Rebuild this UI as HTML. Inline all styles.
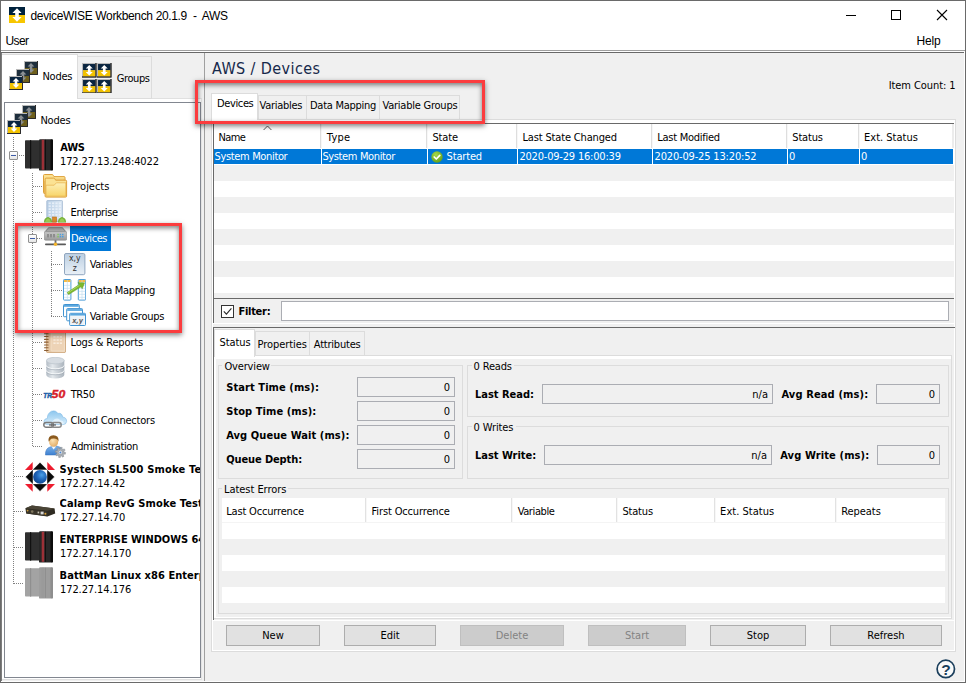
<!DOCTYPE html>
<html lang="en"><head><meta charset="utf-8"><title>deviceWISE Workbench 20.1.9 - AWS</title>
<style>
html,body{margin:0;padding:0}
body{width:966px;height:683px;position:relative;overflow:hidden;background:#f0f0f0;font-family:'DejaVu Sans Condensed','Liberation Sans',sans-serif;font-size:11px;color:#000}
div,span.t,svg{position:absolute}
span.t{white-space:pre;line-height:16px;height:16px}
.fld{box-sizing:border-box;border:1px solid #abadb3;background:#f0f0f0}
.btn{box-sizing:border-box;border:1px solid #adadad;background:#e1e1e1}
.btn.dis{border-color:#bfbfbf;background:#cccccc}
.grp{box-sizing:border-box;border:1px solid #dcdcdc}
.clipL{width:140.4px;overflow:hidden}
</style></head><body>

<div style="left:0px;top:0px;width:966px;height:683px;background:#6a6a6a;"></div>
<div style="left:1px;top:1px;width:964px;height:681px;background:#ffffff;"></div>
<!-- title bar -->
<svg style="left:9px;top:7px" width="16" height="16" viewBox="0 0 16 16"><rect width="16" height="8" fill="#00223d"/><rect y="8" width="16" height="8" fill="#f7c600"/><path d="M8 1.2 L12.6 6 H9.8 V10 H12.6 L8 14.8 L3.4 10 H6.2 V6 H3.4 Z" fill="#fff"/></svg>
<span class="t" style="left:30.5px;top:8px;font-size:12px;font-family:'Liberation Sans',sans-serif;letter-spacing:-0.35px;">deviceWISE Workbench 20.1.9  -  AWS</span>
<div style="left:846px;top:15px;width:10px;height:1px;background:#000;"></div>
<div style="left:891px;top:10px;width:10px;height:10px;box-sizing:border-box;border:1px solid #000;"></div>
<svg style="left:936px;top:9px" width="12" height="12" viewBox="0 0 12 12"><path d="M1 1 L11 11 M11 1 L1 11" stroke="#000" stroke-width="1.1" fill="none"/></svg>
<span class="t" style="left:5.5px;top:33px;font-size:12px;font-family:'Liberation Sans',sans-serif;letter-spacing:-0.6px;">User</span>
<span class="t" style="left:916.5px;top:33px;font-size:12px;font-family:'Liberation Sans',sans-serif;letter-spacing:-0.192px;">Help</span>
<div style="left:1px;top:50px;width:964px;height:1px;background:#a0a0a0;"></div>
<div style="left:1px;top:52px;width:963px;height:1px;background:#696969;"></div>
<div style="left:1px;top:53px;width:963px;height:628px;background:#f0f0f0;"></div>
<!-- left panel -->
<div style="left:1px;top:53px;width:1px;height:628px;background:#7d7d7d;"></div>
<div style="left:2px;top:99px;width:199px;height:580px;background:#ffffff;"></div>
<div style="left:201px;top:98px;width:1px;height:582px;background:#e3e3e3;"></div>
<div style="left:2px;top:679px;width:199px;height:1px;background:#e0e0e0;"></div>
<div style="left:2px;top:54px;width:76px;height:45px;background:#ffffff;box-sizing:border-box;border-top:1px solid #dcdcdc;border-right:1px solid #dcdcdc;"></div>
<div style="left:78px;top:56px;width:74px;height:43px;background:#f0f0f0;box-sizing:border-box;border:1px solid #dcdcdc;border-left:none;"></div>
<div style="left:152px;top:98px;width:50px;height:1px;background:#e0e0e0;"></div>
<div style="left:204px;top:53px;width:1px;height:628px;background:#a0a0a0;"></div>
<div style="left:4px;top:102px;width:197px;height:576px;background:#ffffff;box-sizing:border-box;border:1px solid #828790;"></div>
<svg style="left:23.5px;top:61px" width="14" height="14" viewBox="0 0 14 14"><rect width="14" height="14" fill="#4a4a4a"/><rect x="0" y="0" width="13" height="13" fill="#b9b9b9"/><rect x="1" y="1" width="12" height="6" fill="#1f2f3d"/><rect x="1" y="7" width="12" height="6" fill="#6e5f1c"/><path d="M7 2 L10.4 5.4 H8.3 V8.6 H10.4 L7 12 L3.6 8.6 H5.7 V5.4 H3.6 Z" fill="#8a8f94"/><path d="M0 13.5 H13.5 V0" stroke="#2b2b2b" stroke-width="1" fill="none"/></svg>
<svg style="left:16.0px;top:68.7px" width="14" height="14" viewBox="0 0 14 14"><rect width="14" height="14" fill="#4a4a4a"/><rect x="0" y="0" width="13" height="13" fill="#b9b9b9"/><rect x="1" y="1" width="12" height="6" fill="#1f2f3d"/><rect x="1" y="7" width="12" height="6" fill="#6e5f1c"/><path d="M7 2 L10.4 5.4 H8.3 V8.6 H10.4 L7 12 L3.6 8.6 H5.7 V5.4 H3.6 Z" fill="#8a8f94"/><path d="M0 13.5 H13.5 V0" stroke="#2b2b2b" stroke-width="1" fill="none"/></svg>
<svg style="left:8.5px;top:76.4px" width="14" height="14" viewBox="0 0 14 14"><rect width="14" height="14" fill="#4a4a4a"/><rect x="0" y="0" width="13" height="13" fill="#b9b9b9"/><rect x="1" y="1" width="12" height="6" fill="#0a2540"/><rect x="1" y="7" width="12" height="6" fill="#f2c200"/><path d="M7 2 L10.4 5.4 H8.3 V8.6 H10.4 L7 12 L3.6 8.6 H5.7 V5.4 H3.6 Z" fill="#ffffff"/><path d="M0 13.5 H13.5 V0" stroke="#2b2b2b" stroke-width="1" fill="none"/></svg>
<span class="t" style="left:42.4px;top:69px;font-size:11px;letter-spacing:-0.223px;">Nodes</span>
<svg style="left:82px;top:63px" width="14.5" height="14.5" viewBox="0 0 14 14"><rect width="14" height="14" fill="#4a4a4a"/><rect x="0" y="0" width="13" height="13" fill="#b9b9b9"/><rect x="1" y="1" width="12" height="6" fill="#0a2540"/><rect x="1" y="7" width="12" height="6" fill="#f2c200"/><path d="M7 2 L10.4 5.4 H8.3 V8.6 H10.4 L7 12 L3.6 8.6 H5.7 V5.4 H3.6 Z" fill="#ffffff"/><path d="M0 13.5 H13.5 V0" stroke="#2b2b2b" stroke-width="1" fill="none"/></svg>
<svg style="left:97px;top:63px" width="14.5" height="14.5" viewBox="0 0 14 14"><rect width="14" height="14" fill="#4a4a4a"/><rect x="0" y="0" width="13" height="13" fill="#b9b9b9"/><rect x="1" y="1" width="12" height="6" fill="#0a2540"/><rect x="1" y="7" width="12" height="6" fill="#f2c200"/><path d="M7 2 L10.4 5.4 H8.3 V8.6 H10.4 L7 12 L3.6 8.6 H5.7 V5.4 H3.6 Z" fill="#ffffff"/><path d="M0 13.5 H13.5 V0" stroke="#2b2b2b" stroke-width="1" fill="none"/></svg>
<svg style="left:82px;top:78.5px" width="14.5" height="14.5" viewBox="0 0 14 14"><rect width="14" height="14" fill="#4a4a4a"/><rect x="0" y="0" width="13" height="13" fill="#b9b9b9"/><rect x="1" y="1" width="12" height="6" fill="#0a2540"/><rect x="1" y="7" width="12" height="6" fill="#f2c200"/><path d="M7 2 L10.4 5.4 H8.3 V8.6 H10.4 L7 12 L3.6 8.6 H5.7 V5.4 H3.6 Z" fill="#ffffff"/><path d="M0 13.5 H13.5 V0" stroke="#2b2b2b" stroke-width="1" fill="none"/></svg>
<svg style="left:97px;top:78.5px" width="14.5" height="14.5" viewBox="0 0 14 14"><rect width="14" height="14" fill="#4a4a4a"/><rect x="0" y="0" width="13" height="13" fill="#b9b9b9"/><rect x="1" y="1" width="12" height="6" fill="#0a2540"/><rect x="1" y="7" width="12" height="6" fill="#f2c200"/><path d="M7 2 L10.4 5.4 H8.3 V8.6 H10.4 L7 12 L3.6 8.6 H5.7 V5.4 H3.6 Z" fill="#ffffff"/><path d="M0 13.5 H13.5 V0" stroke="#2b2b2b" stroke-width="1" fill="none"/></svg>
<span class="t" style="left:116.7px;top:71px;font-size:11px;letter-spacing:-0.391px;">Groups</span>
<!-- tree -->
<svg style="left:21.5px;top:105px" width="14" height="14" viewBox="0 0 14 14"><rect width="14" height="14" fill="#4a4a4a"/><rect x="0" y="0" width="13" height="13" fill="#b9b9b9"/><rect x="1" y="1" width="12" height="6" fill="#1f2f3d"/><rect x="1" y="7" width="12" height="6" fill="#6e5f1c"/><path d="M7 2 L10.4 5.4 H8.3 V8.6 H10.4 L7 12 L3.6 8.6 H5.7 V5.4 H3.6 Z" fill="#8a8f94"/><path d="M0 13.5 H13.5 V0" stroke="#2b2b2b" stroke-width="1" fill="none"/></svg>
<svg style="left:14.0px;top:112.7px" width="14" height="14" viewBox="0 0 14 14"><rect width="14" height="14" fill="#4a4a4a"/><rect x="0" y="0" width="13" height="13" fill="#b9b9b9"/><rect x="1" y="1" width="12" height="6" fill="#1f2f3d"/><rect x="1" y="7" width="12" height="6" fill="#6e5f1c"/><path d="M7 2 L10.4 5.4 H8.3 V8.6 H10.4 L7 12 L3.6 8.6 H5.7 V5.4 H3.6 Z" fill="#8a8f94"/><path d="M0 13.5 H13.5 V0" stroke="#2b2b2b" stroke-width="1" fill="none"/></svg>
<svg style="left:6.5px;top:120.4px" width="14" height="14" viewBox="0 0 14 14"><rect width="14" height="14" fill="#4a4a4a"/><rect x="0" y="0" width="13" height="13" fill="#b9b9b9"/><rect x="1" y="1" width="12" height="6" fill="#0a2540"/><rect x="1" y="7" width="12" height="6" fill="#f2c200"/><path d="M7 2 L10.4 5.4 H8.3 V8.6 H10.4 L7 12 L3.6 8.6 H5.7 V5.4 H3.6 Z" fill="#ffffff"/><path d="M0 13.5 H13.5 V0" stroke="#2b2b2b" stroke-width="1" fill="none"/></svg>
<span class="t" style="left:40.4px;top:113px;font-size:11px;letter-spacing:-0.198px;">Nodes</span>
<div style="left:13px;top:137px;width:1px;height:447px;background:repeating-linear-gradient(to bottom,#808080 0 1px,transparent 1px 2px);"></div>
<div style="left:32px;top:173px;width:1px;height:274px;background:repeating-linear-gradient(to bottom,#808080 0 1px,transparent 1px 2px);"></div>
<div style="left:51px;top:251px;width:1px;height:66px;background:repeating-linear-gradient(to bottom,#808080 0 1px,transparent 1px 2px);"></div>
<div style="left:19px;top:155px;width:6px;height:1px;background:repeating-linear-gradient(to right,#808080 0 1px,transparent 1px 2px);"></div>
<div style="left:33px;top:186px;width:10px;height:1px;background:repeating-linear-gradient(to right,#808080 0 1px,transparent 1px 2px);"></div>
<div style="left:33px;top:212px;width:10px;height:1px;background:repeating-linear-gradient(to right,#808080 0 1px,transparent 1px 2px);"></div>
<div style="left:33px;top:342px;width:10px;height:1px;background:repeating-linear-gradient(to right,#808080 0 1px,transparent 1px 2px);"></div>
<div style="left:33px;top:368px;width:10px;height:1px;background:repeating-linear-gradient(to right,#808080 0 1px,transparent 1px 2px);"></div>
<div style="left:33px;top:394px;width:10px;height:1px;background:repeating-linear-gradient(to right,#808080 0 1px,transparent 1px 2px);"></div>
<div style="left:33px;top:420px;width:10px;height:1px;background:repeating-linear-gradient(to right,#808080 0 1px,transparent 1px 2px);"></div>
<div style="left:33px;top:446px;width:10px;height:1px;background:repeating-linear-gradient(to right,#808080 0 1px,transparent 1px 2px);"></div>
<div style="left:37px;top:238px;width:6px;height:1px;background:repeating-linear-gradient(to right,#808080 0 1px,transparent 1px 2px);"></div>
<div style="left:51px;top:264px;width:11px;height:1px;background:repeating-linear-gradient(to right,#808080 0 1px,transparent 1px 2px);"></div>
<div style="left:51px;top:290px;width:11px;height:1px;background:repeating-linear-gradient(to right,#808080 0 1px,transparent 1px 2px);"></div>
<div style="left:51px;top:316px;width:11px;height:1px;background:repeating-linear-gradient(to right,#808080 0 1px,transparent 1px 2px);"></div>
<div style="left:14px;top:476px;width:10px;height:1px;background:repeating-linear-gradient(to right,#808080 0 1px,transparent 1px 2px);"></div>
<div style="left:14px;top:511px;width:10px;height:1px;background:repeating-linear-gradient(to right,#808080 0 1px,transparent 1px 2px);"></div>
<div style="left:14px;top:547px;width:10px;height:1px;background:repeating-linear-gradient(to right,#808080 0 1px,transparent 1px 2px);"></div>
<div style="left:14px;top:583px;width:10px;height:1px;background:repeating-linear-gradient(to right,#808080 0 1px,transparent 1px 2px);"></div>
<div style="left:9px;top:151px;width:9px;height:9px;box-sizing:border-box;border:1px solid #919191;border-radius:1px;background:linear-gradient(#fff,#e6e6e6)"></div>
<div style="left:11px;top:155px;width:5px;height:1px;background:#3c5aa6;"></div>
<div style="left:28px;top:234px;width:9px;height:9px;box-sizing:border-box;border:1px solid #919191;border-radius:1px;background:linear-gradient(#fff,#e6e6e6)"></div>
<div style="left:30px;top:238px;width:5px;height:1px;background:#3c5aa6;"></div>
<svg style="left:25px;top:139.4px" width="28" height="32" viewBox="0 0 28 32"><rect x="0" y="1.2" width="15" height="28.4" rx="0.8" fill="#2f2f2f"/><rect x="5" y="1.2" width="1.2" height="28.4" fill="#101010"/><rect x="14" y="0.2" width="14" height="31.4" rx="1.2" fill="#272727"/><rect x="16.7" y="0.8" width="2.5" height="30" fill="#9c3037"/><rect x="20" y="0.8" width="1" height="30" fill="#101010"/><rect x="25.5" y="0.6" width="2.5" height="30.6" rx="1" fill="#0c0c0c"/></svg>
<span class="t" style="left:60.2px;top:140px;font-size:11px;font-weight:bold;letter-spacing:-0.209px;">AWS</span>
<span class="t" style="left:60.0px;top:154px;font-size:11px;letter-spacing:-0.112px;">172.27.13.248:4022</span>
<svg style="left:43px;top:174px" width="25" height="24" viewBox="0 0 25 24"><defs><linearGradient id="fg" x1="0" y1="0" x2="0" y2="1"><stop offset="0" stop-color="#fdf0b8"/><stop offset="1" stop-color="#f8d56a"/></linearGradient></defs><g transform="translate(0,0)"><path d="M0.5 1.5 Q0.5 0.5 1.5 0.5 H9 Q10 0.5 10.4 1.5 L11 2.6 H21 Q22 2.6 22 3.6 V18.5 Q22 19.5 21 19.5 H1.5 Q0.5 19.5 0.5 18.5 Z" fill="#fbe293" stroke="#dea03a" stroke-width="1"/><path d="M1.4 7.6 H9.6 L11.8 5.2 H21.2 V18.6 H1.4 Z" fill="url(#fg)" stroke="#e6b04c" stroke-width="0.7"/></g><g transform="translate(1.6,3.6)"><path d="M0.5 1.5 Q0.5 0.5 1.5 0.5 H9 Q10 0.5 10.4 1.5 L11 2.6 H21 Q22 2.6 22 3.6 V18.5 Q22 19.5 21 19.5 H1.5 Q0.5 19.5 0.5 18.5 Z" fill="#fbe293" stroke="#dea03a" stroke-width="1"/><path d="M1.4 7.6 H9.6 L11.8 5.2 H21.2 V18.6 H1.4 Z" fill="url(#fg)" stroke="#e6b04c" stroke-width="0.7"/></g></svg>
<span class="t" style="left:70.6px;top:179px;font-size:11px;letter-spacing:-0.038px;">Projects</span>
<svg style="left:44px;top:200px" width="22" height="23" viewBox="0 0 22 23"><defs><linearGradient id="bg1" x1="0" y1="0" x2="1" y2="0"><stop offset="0" stop-color="#b9cfe6"/><stop offset="1" stop-color="#dbe7f3"/></linearGradient></defs><rect x="2.8" y="0.4" width="15.6" height="21" rx="0.8" fill="url(#bg1)" stroke="#9fb6cf" stroke-width="0.8"/><rect x="4.6" y="2.4" width="2.2" height="1.8" fill="#e9f1f9" opacity="0.9"/><rect x="8.0" y="2.4" width="2.2" height="1.8" fill="#e9f1f9" opacity="0.9"/><rect x="11.399999999999999" y="2.4" width="2.2" height="1.8" fill="#e9f1f9" opacity="0.9"/><rect x="14.799999999999999" y="2.4" width="2.2" height="1.8" fill="#e9f1f9" opacity="0.9"/><rect x="4.6" y="5.3" width="2.2" height="1.8" fill="#e9f1f9" opacity="0.9"/><rect x="8.0" y="5.3" width="2.2" height="1.8" fill="#e9f1f9" opacity="0.9"/><rect x="11.399999999999999" y="5.3" width="2.2" height="1.8" fill="#e9f1f9" opacity="0.9"/><rect x="14.799999999999999" y="5.3" width="2.2" height="1.8" fill="#e9f1f9" opacity="0.9"/><rect x="4.6" y="8.2" width="2.2" height="1.8" fill="#e9f1f9" opacity="0.9"/><rect x="8.0" y="8.2" width="2.2" height="1.8" fill="#e9f1f9" opacity="0.9"/><rect x="11.399999999999999" y="8.2" width="2.2" height="1.8" fill="#e9f1f9" opacity="0.9"/><rect x="14.799999999999999" y="8.2" width="2.2" height="1.8" fill="#e9f1f9" opacity="0.9"/><rect x="4.6" y="11.1" width="2.2" height="1.8" fill="#e9f1f9" opacity="0.9"/><rect x="8.0" y="11.1" width="2.2" height="1.8" fill="#e9f1f9" opacity="0.9"/><rect x="11.399999999999999" y="11.1" width="2.2" height="1.8" fill="#e9f1f9" opacity="0.9"/><rect x="14.799999999999999" y="11.1" width="2.2" height="1.8" fill="#e9f1f9" opacity="0.9"/><rect x="4.6" y="14.0" width="2.2" height="1.8" fill="#e9f1f9" opacity="0.9"/><rect x="8.0" y="14.0" width="2.2" height="1.8" fill="#e9f1f9" opacity="0.9"/><rect x="11.399999999999999" y="14.0" width="2.2" height="1.8" fill="#e9f1f9" opacity="0.9"/><rect x="14.799999999999999" y="14.0" width="2.2" height="1.8" fill="#e9f1f9" opacity="0.9"/><rect x="4.6" y="16.9" width="2.2" height="1.8" fill="#e9f1f9" opacity="0.9"/><rect x="8.0" y="16.9" width="2.2" height="1.8" fill="#e9f1f9" opacity="0.9"/><rect x="11.399999999999999" y="16.9" width="2.2" height="1.8" fill="#e9f1f9" opacity="0.9"/><rect x="14.799999999999999" y="16.9" width="2.2" height="1.8" fill="#e9f1f9" opacity="0.9"/><rect x="8.6" y="17" width="4" height="5.2" fill="#d98a2b" stroke="#b86a14" stroke-width="0.6"/><path d="M0 22.4 Q0 18.6 2 18 Q4 16.2 6 18 Q8 18.6 8 22.4 Z" fill="#78b33a"/><path d="M14 22.4 Q14 18.6 16 18 Q18 16.2 20 18 Q22 18.6 22 22.4 Z" fill="#78b33a"/><path d="M1 22 Q2 19 4 18.2 Q6 19 7 22Z" fill="#9ccf55"/><path d="M15 22 Q16 19 18 18.2 Q20 19 21 22Z" fill="#9ccf55"/></svg>
<span class="t" style="left:70.6px;top:205px;font-size:11px;letter-spacing:-0.389px;">Enterprise</span>
<div style="left:70px;top:225px;width:41px;height:26px;background:#0078d7;"></div>
<svg style="left:43.5px;top:227.2px" width="23" height="20" viewBox="0 0 23 20"><defs><linearGradient id="dg" x1="0" y1="0" x2="0" y2="1"><stop offset="0" stop-color="#c9c9c9"/><stop offset="1" stop-color="#9a9a9a"/></linearGradient></defs><path d="M4.6 0.3 H18.4 L22.6 4.8 H0.4 Z" fill="#8f8f8f"/><path d="M5 0.8 H18 L20.8 4.2 H2.2 Z" fill="#b4b4b4"/><rect x="0.3" y="4.6" width="22.4" height="8.6" rx="1.2" fill="url(#dg)" stroke="#8a8a8a" stroke-width="0.6"/><rect x="3" y="7" width="2" height="3.4" fill="#8d8d8d"/><rect x="6" y="7" width="2" height="3.4" fill="#8d8d8d"/><rect x="9" y="7" width="2" height="3.4" fill="#8d8d8d"/><rect x="13.4" y="6.8" width="1.3" height="1.4" fill="#7ec850"/><rect x="13.4" y="9" width="1.3" height="1.4" fill="#7ec850"/><rect x="15.6" y="6.8" width="1.5" height="1.4" fill="#4a9ee0"/><rect x="18" y="6.8" width="1.5" height="1.4" fill="#4a9ee0"/><rect x="15.6" y="9" width="1.5" height="1.4" fill="#4a9ee0"/><rect x="18" y="9" width="1.5" height="1.4" fill="#4a9ee0"/><rect x="10.6" y="13.2" width="1.8" height="4" fill="#6a6a6a"/><rect x="1" y="16.6" width="21" height="1.7" rx="0.8" fill="#5a5a5a"/><circle cx="11.5" cy="17.3" r="1.7" fill="#f6b52a"/></svg>
<span class="t" style="left:71.0px;top:231px;font-size:11px;color:#fff;letter-spacing:-0.418px;">Devices</span>
<svg style="left:64px;top:253px" width="22" height="23" viewBox="0 0 22 23"><defs><linearGradient id="vg" x1="0" y1="0" x2="0" y2="1"><stop offset="0" stop-color="#bccfe2"/><stop offset="1" stop-color="#e9f0f7"/></linearGradient></defs><rect x="0.5" y="0.5" width="20.4" height="21.2" rx="1.5" fill="url(#vg)" stroke="#90a6bf" stroke-width="1"/><text x="10.7" y="8.3" text-anchor="middle" font-family="'DejaVu Sans Condensed','Liberation Sans',sans-serif" font-size="8.6" fill="#2e2e2e">x,y</text><text x="10.7" y="18.2" text-anchor="middle" font-family="'DejaVu Sans Condensed','Liberation Sans',sans-serif" font-size="8.6" fill="#2e2e2e">z</text></svg>
<span class="t" style="left:89.7px;top:257px;font-size:11px;letter-spacing:-0.305px;">Variables</span>
<svg style="left:62.5px;top:278.6px" width="23" height="22" viewBox="0 0 23 22"><g transform="translate(0,0)"><rect x="0.5" y="0.5" width="7.4" height="20.6" rx="0.8" fill="#fff" stroke="#4b9bd6" stroke-width="1"/><rect x="1" y="1" width="6.4" height="2" fill="#f6bb45"/><rect x="1" y="5.9" width="6.4" height="0.6" fill="#bcd9ee"/><rect x="1" y="8.899999999999999" width="6.4" height="0.6" fill="#bcd9ee"/><rect x="1" y="11.899999999999999" width="6.4" height="0.6" fill="#bcd9ee"/><rect x="1" y="14.899999999999999" width="6.4" height="0.6" fill="#bcd9ee"/><rect x="1" y="17.9" width="6.4" height="0.6" fill="#bcd9ee"/><rect x="3.9" y="1" width="0.6" height="19.6" fill="#bcd9ee"/></g><g transform="translate(14.8,0)"><rect x="0.5" y="0.5" width="7.4" height="20.6" rx="0.8" fill="#fff" stroke="#4b9bd6" stroke-width="1"/><rect x="1" y="1" width="6.4" height="2" fill="#f6bb45"/><rect x="1" y="5.9" width="6.4" height="0.6" fill="#bcd9ee"/><rect x="1" y="8.899999999999999" width="6.4" height="0.6" fill="#bcd9ee"/><rect x="1" y="11.899999999999999" width="6.4" height="0.6" fill="#bcd9ee"/><rect x="1" y="14.899999999999999" width="6.4" height="0.6" fill="#bcd9ee"/><rect x="1" y="17.9" width="6.4" height="0.6" fill="#bcd9ee"/><rect x="3.9" y="1" width="0.6" height="19.6" fill="#bcd9ee"/></g><path d="M4.2 13.6 L16.2 5.6 L15 3.6 L21.6 3.8 L19.2 9.8 L18 7.8 L5.6 15.6 Z" fill="#7cb82c" stroke="#5e9a1c" stroke-width="0.5"/><path d="M5 13.8 L16.4 6.4" stroke="#b6e070" stroke-width="0.8"/></svg>
<span class="t" style="left:89.7px;top:283px;font-size:11px;letter-spacing:-0.34px;">Data Mapping</span>
<svg style="left:62.5px;top:304px" width="23" height="23" viewBox="0 0 23 23"><g transform="translate(0,0)"><rect x="0.5" y="0.5" width="15.8" height="12.2" rx="0.8" fill="#fff" stroke="#3f93d2" stroke-width="1"/><rect x="1" y="1" width="14.8" height="1.8" fill="#5aa7de"/></g><g transform="translate(3.2,4.1)"><rect x="0.5" y="0.5" width="15.8" height="12.2" rx="0.8" fill="#fff" stroke="#3f93d2" stroke-width="1"/><rect x="1" y="1" width="14.8" height="1.8" fill="#5aa7de"/></g><g transform="translate(6.2,8.8)"><rect x="0.5" y="0.5" width="15.8" height="12.2" rx="0.8" fill="#fff" stroke="#3f93d2" stroke-width="1"/><rect x="1" y="1" width="14.8" height="1.8" fill="#5aa7de"/><rect x="1.4" y="3.4" width="14" height="8.6" fill="#eef2f6"/><text x="8.4" y="10.2" text-anchor="middle" font-family="'DejaVu Sans Condensed','Liberation Sans',sans-serif" font-size="7.2" font-weight="bold" font-style="italic" fill="#5f5f5f">x,y</text></g></svg>
<span class="t" style="left:89.7px;top:309px;font-size:11px;letter-spacing:-0.263px;">Variable Groups</span>
<svg style="left:44px;top:331.4px" width="22" height="22" viewBox="0 0 22 22"><defs><linearGradient id="ng" x1="0" y1="0" x2="1" y2="1"><stop offset="0" stop-color="#dcb78f"/><stop offset="1" stop-color="#efd9bf"/></linearGradient></defs><rect x="2.4" y="0.4" width="19.2" height="21.2" rx="1.4" fill="url(#ng)" stroke="#c69a6a" stroke-width="0.8"/><rect x="7" y="1.4" width="13.4" height="18.6" rx="0.8" fill="#edd3b6" stroke="#f6e7d4" stroke-width="0.6"/><rect x="9.4" y="5.0" width="2.2" height="1.6" fill="#f8ecdd"/><rect x="12.600000000000001" y="5.0" width="2.2" height="1.6" fill="#f8ecdd"/><rect x="15.8" y="5.0" width="2.2" height="1.6" fill="#f8ecdd"/><rect x="9.4" y="8.2" width="2.2" height="1.6" fill="#f8ecdd"/><rect x="12.600000000000001" y="8.2" width="2.2" height="1.6" fill="#f8ecdd"/><rect x="15.8" y="8.2" width="2.2" height="1.6" fill="#f8ecdd"/><rect x="9.4" y="11.4" width="2.2" height="1.6" fill="#f8ecdd"/><rect x="12.600000000000001" y="11.4" width="2.2" height="1.6" fill="#f8ecdd"/><rect x="15.8" y="11.4" width="2.2" height="1.6" fill="#f8ecdd"/><rect x="0" y="2.2" width="4.6" height="1.1" rx="0.5" fill="#8b5e34"/><rect x="0" y="5.0" width="4.6" height="1.1" rx="0.5" fill="#8b5e34"/><rect x="0" y="7.8" width="4.6" height="1.1" rx="0.5" fill="#8b5e34"/><rect x="0" y="10.599999999999998" width="4.6" height="1.1" rx="0.5" fill="#8b5e34"/><rect x="0" y="13.399999999999999" width="4.6" height="1.1" rx="0.5" fill="#8b5e34"/><rect x="0" y="16.2" width="4.6" height="1.1" rx="0.5" fill="#8b5e34"/><rect x="0" y="18.999999999999996" width="4.6" height="1.1" rx="0.5" fill="#8b5e34"/></svg>
<span class="t" style="left:70.6px;top:335px;font-size:11px;letter-spacing:-0.171px;">Logs &amp; Reports</span>
<svg style="left:45.7px;top:356.6px" width="19" height="22" viewBox="0 0 19 22"><defs><linearGradient id="cg" x1="0" y1="0" x2="1" y2="0"><stop offset="0" stop-color="#b3bcc5"/><stop offset="0.35" stop-color="#e3e8ec"/><stop offset="1" stop-color="#aab3bc"/></linearGradient></defs><path d="M0.3 3.6 V18 A9 3.4 0 0 0 18.3 18 V3.6 Z" fill="url(#cg)"/><ellipse cx="9.3" cy="3.6" rx="9" ry="3.3" fill="#d6dce2" stroke="#b4bdc6" stroke-width="0.6"/><path d="M0.3 8.6 A9 3.2 0 0 0 18.3 8.6" fill="none" stroke="#f2f5f7" stroke-width="1.1"/><path d="M0.3 13.6 A9 3.2 0 0 0 18.3 13.6" fill="none" stroke="#f2f5f7" stroke-width="1.1"/><path d="M0.3 9.6 A9 3.2 0 0 0 18.3 9.6" fill="none" stroke="#9ba5af" stroke-width="0.6"/><path d="M0.3 14.6 A9 3.2 0 0 0 18.3 14.6" fill="none" stroke="#9ba5af" stroke-width="0.6"/></svg>
<span class="t" style="left:70.6px;top:361px;font-size:11px;letter-spacing:0.254px;">Local Database</span>
<svg style="left:43.4px;top:389px" width="24" height="10" viewBox="0 0 24 10"><text x="0.2" y="8.6" font-family="'Liberation Sans',sans-serif" font-size="6.6" font-weight="bold" font-style="italic" fill="#1f5fa8" stroke="#1f5fa8" stroke-width="0.45" textLength="8.6" lengthAdjust="spacingAndGlyphs">TR</text><text x="8.6" y="8.6" font-family="'Liberation Sans',sans-serif" font-size="11.4" font-weight="bold" font-style="italic" fill="#d8202a" stroke="#d8202a" stroke-width="0.4" textLength="13.6" lengthAdjust="spacingAndGlyphs">50</text></svg>
<span class="t" style="left:70.63px;top:387px;font-size:11px;letter-spacing:-0.378px;">TR50</span>
<svg style="left:42.6px;top:409.8px" width="25" height="19" viewBox="0 0 25 19"><defs><linearGradient id="clg" x1="0" y1="0" x2="0" y2="1"><stop offset="0" stop-color="#8cc6ee"/><stop offset="1" stop-color="#d9eefb"/></linearGradient></defs><path d="M4 14.6 Q0.6 14.4 1 11.2 Q1.4 8.4 4.4 8.4 Q4.2 3.4 8.6 1.2 Q12.6 -0.2 15 3.4 Q19 2.6 19.6 7 Q23.8 7.6 23.6 11.6 Q23.2 14.8 19.6 14.6 Z" fill="url(#clg)" stroke="#7fbbe6" stroke-width="0.6"/><path d="M9.4 14 Q9.2 10 12.6 8.8 Q16 8 17.4 10.6 Q20.4 10.4 20.8 14 Z" fill="#e8f5fd" opacity="0.85"/><rect x="0.8" y="12.6" width="9.6" height="4.6" rx="2.3" fill="none" stroke="#7a7a7a" stroke-width="1.5"/><rect x="8.6" y="12.6" width="9.6" height="4.6" rx="2.3" fill="none" stroke="#8a8a8a" stroke-width="1.5"/><rect x="6" y="14.3" width="7" height="1.3" fill="#6a6a6a"/></svg>
<span class="t" style="left:70.6px;top:413px;font-size:11px;letter-spacing:-0.208px;">Cloud Connectors</span>
<svg style="left:45.4px;top:434.6px" width="22" height="23.5" viewBox="0 0 22 23.5"><defs><linearGradient id="sh" x1="0" y1="0" x2="0" y2="1"><stop offset="0" stop-color="#7db4ea"/><stop offset="1" stop-color="#3c7fd0"/></linearGradient><radialGradient id="fc" cx="0.4" cy="0.4" r="0.7"><stop offset="0" stop-color="#fbe3b5"/><stop offset="1" stop-color="#e0a860"/></radialGradient></defs><path d="M0.4 20 Q0.2 13.4 5 12 L8.4 11 L11.6 11 L14.6 12 Q17 12.8 17.4 16 L17.4 20 Z" fill="url(#sh)" stroke="#3a73ba" stroke-width="0.5"/><path d="M6.4 11.2 L8.6 14.6 L11.2 11.2 Z" fill="#f4f8fc"/><ellipse cx="8.6" cy="6.4" rx="4.6" ry="5.4" fill="url(#fc)"/><path d="M3.6 6.6 Q2.6 0.6 8.4 0.3 Q14 0.4 13.6 6.4 Q12.4 3.6 9 3.6 Q6 3.4 5 5 Q4.4 6 3.6 6.6 Z" fill="#8b5a1e"/><g transform="translate(15.4,17.4)"><polygon points="5.20,0.14 4.85,1.86 3.38,1.51 2.68,2.55 3.58,3.77 2.12,4.75 1.33,3.45 0.10,3.70 -0.14,5.20 -1.86,4.85 -1.51,3.38 -2.55,2.68 -3.77,3.58 -4.75,2.12 -3.45,1.33 -3.70,0.10 -5.20,-0.14 -4.85,-1.86 -3.38,-1.51 -2.68,-2.55 -3.58,-3.77 -2.12,-4.75 -1.33,-3.45 -0.10,-3.70 0.14,-5.20 1.86,-4.85 1.51,-3.38 2.55,-2.68 3.77,-3.58 4.75,-2.12 3.45,-1.33 3.70,-0.10" fill="#a9aeb4" stroke="#80868d" stroke-width="0.5"/><circle r="2.1" fill="#e9ecef" stroke="#80868d" stroke-width="0.5"/><circle r="1" fill="#4f86cf"/></g></svg>
<span class="t" style="left:71.0px;top:439px;font-size:11px;letter-spacing:-0.4px;">Administration</span>
<svg style="left:24.8px;top:461.8px" width="30" height="30" viewBox="0 0 30 30"><defs><radialGradient id="sp" cx="0.62" cy="0.36" r="0.75"><stop offset="0" stop-color="#4aa0e8"/><stop offset="0.5" stop-color="#1c62b6"/><stop offset="1" stop-color="#0c3f86"/></radialGradient></defs><polygon points="0,7.9 7.7,0 7.7,7.9" fill="#ee1c2e"/><polygon points="30,7.9 22.3,0 22.3,7.9" fill="#ee1c2e"/><polygon points="0,22 7.7,29.8 7.7,22" fill="#ee1c2e"/><polygon points="30,22 22.3,29.8 22.3,22" fill="#ee1c2e"/><polygon points="15,0.2 29.7,14.9 15,29.6 0.3,14.9" fill="#0a0a0a" stroke="#fff" stroke-width="0.8"/><rect x="7.8" y="7.7" width="14.4" height="14.4" fill="#fff"/><circle cx="15" cy="14.9" r="6.9" fill="url(#sp)"/></svg>
<span class="t clipL" style="left:59.6px;top:462px;font-size:11px;font-weight:bold;letter-spacing:0.2px;">Systech SL500 Smoke Test</span>
<span class="t" style="left:60.0px;top:476px;font-size:11px;letter-spacing:-0.08px;">172.27.14.42</span>
<svg style="left:24.8px;top:504.6px" width="31" height="12" viewBox="0 0 31 12"><path d="M0.4 3.2 L7 0.6 L29.6 3.6 L30.2 8.4 L22.4 11.6 L1.2 8.6 Z" fill="#2f2b22"/><path d="M0.4 3.2 L7 0.6 L29.6 3.6 L22.6 5.8 Z" fill="#4a4436"/><path d="M1 4.2 L22.4 6.6 L22.4 11.2 L1.4 8.4 Z" fill="#3a352a"/><circle cx="7.2" cy="6.6" r="1.3" fill="#7d745c"/><rect x="12.6" y="6.6" width="1.6" height="1.8" fill="#c9c4b4"/><rect x="15.6" y="6.6" width="3" height="2.8" fill="#d8d8d8"/><circle cx="20.4" cy="8.8" r="1" fill="#d9a23a"/><circle cx="2.6" cy="5.6" r="0.9" fill="#c79a3a"/></svg>
<span class="t clipL" style="left:59.6px;top:496px;font-size:11px;font-weight:bold;letter-spacing:0.13px;">Calamp RevG Smoke Test</span>
<span class="t" style="left:60.0px;top:510px;font-size:11px;letter-spacing:-0.08px;">172.27.14.70</span>
<svg style="left:25px;top:531px" width="28" height="32" viewBox="0 0 28 32"><rect x="0" y="1.2" width="15" height="28.4" rx="0.8" fill="#2f2f2f"/><rect x="5" y="1.2" width="1.2" height="28.4" fill="#101010"/><rect x="14" y="0.2" width="14" height="31.4" rx="1.2" fill="#272727"/><rect x="16.7" y="0.8" width="2.5" height="30" fill="#9c3037"/><rect x="20" y="0.8" width="1" height="30" fill="#101010"/><rect x="25.5" y="0.6" width="2.5" height="30.6" rx="1" fill="#0c0c0c"/></svg>
<span class="t clipL" style="left:59.6px;top:532px;font-size:11px;font-weight:bold;letter-spacing:-0.06px;">ENTERPRISE WINDOWS 64</span>
<span class="t" style="left:60.0px;top:546px;font-size:11px;letter-spacing:-0.098px;">172.27.14.170</span>
<svg style="left:25px;top:567px" width="28" height="32" viewBox="0 0 28 32"><rect x="0" y="1.2" width="15" height="28.4" rx="0.8" fill="#a3a3a3"/><rect x="5" y="1.2" width="1.2" height="28.4" fill="#8f8f8f"/><rect x="14" y="0.2" width="14" height="31.4" rx="1.2" fill="#9d9d9d"/><rect x="16.7" y="0.8" width="2.5" height="30" fill="#9a9a9a"/><rect x="20" y="0.8" width="1" height="30" fill="#8f8f8f"/><rect x="25.5" y="0.6" width="2.5" height="30.6" rx="1" fill="#8e8e8e"/></svg>
<span class="t clipL" style="left:59.6px;top:568px;font-size:11px;font-weight:bold;letter-spacing:0.05px;">BattMan Linux x86 Enterprise</span>
<span class="t" style="left:60.0px;top:582px;font-size:11px;letter-spacing:-0.098px;">172.27.14.176</span>
<!-- right panel -->
<span class="t" style="left:212.0px;top:61px;font-size:16px;color:#16294b;letter-spacing:0.41px;">AWS / Devices</span>
<span class="t" style="left:888.7px;top:78px;font-size:11px;letter-spacing:-0.077px;">Item Count: 1</span>
<div style="left:211px;top:119px;width:745px;height:533px;box-sizing:border-box;border:1px solid #dcdcdc;"></div>
<div style="left:212px;top:120px;width:743px;height:531px;box-sizing:border-box;border:1px solid #ffffff;"></div>
<div style="left:258px;top:95px;width:49px;height:24px;background:#f0f0f0;box-sizing:border-box;border:1px solid #dcdcdc;border-bottom:none;"></div>
<div style="left:306px;top:95px;width:74px;height:24px;background:#f0f0f0;box-sizing:border-box;border:1px solid #dcdcdc;border-bottom:none;"></div>
<div style="left:379px;top:95px;width:81px;height:24px;background:#f0f0f0;box-sizing:border-box;border:1px solid #dcdcdc;border-bottom:none;"></div>
<div style="left:212px;top:120px;width:743px;height:3px;background:#ffffff;"></div>
<div style="left:211px;top:93px;width:47px;height:27px;background:#ffffff;box-sizing:border-box;border:1px solid #dcdcdc;border-bottom:none;"></div>
<span class="t" style="left:217.0px;top:96px;font-size:11px;letter-spacing:-0.376px;">Devices</span>
<span class="t" style="left:259.5px;top:98px;font-size:11px;letter-spacing:-0.268px;">Variables</span>
<span class="t" style="left:310.0px;top:98px;font-size:11px;letter-spacing:-0.259px;">Data Mapping</span>
<span class="t" style="left:382.5px;top:98px;font-size:11px;letter-spacing:-0.235px;">Variable Groups</span>
<div style="left:214px;top:124px;width:740px;height:174px;background:#ffffff;"></div>
<div style="left:213px;top:123px;width:741px;height:1px;background:#696969;"></div>
<div style="left:213px;top:123px;width:1px;height:200px;background:#696969;"></div>
<div style="left:952px;top:124px;width:2px;height:24px;background:#ececec;"></div>
<div style="left:214px;top:165px;width:740px;height:16px;background:#f0f0f0;"></div>
<div style="left:214px;top:197px;width:740px;height:16px;background:#f0f0f0;"></div>
<div style="left:214px;top:229px;width:740px;height:16px;background:#f0f0f0;"></div>
<div style="left:214px;top:261px;width:740px;height:16px;background:#f0f0f0;"></div>
<div style="left:214px;top:293px;width:740px;height:5px;background:#f0f0f0;"></div>
<div style="left:214px;top:149px;width:107px;height:15px;background:#0078d7;"></div>
<div style="left:322px;top:149px;width:105px;height:15px;background:#0078d7;"></div>
<div style="left:428px;top:149px;width:89px;height:15px;background:#0078d7;"></div>
<div style="left:518px;top:149px;width:134px;height:15px;background:#0078d7;"></div>
<div style="left:653px;top:149px;width:134px;height:15px;background:#0078d7;"></div>
<div style="left:788px;top:149px;width:71px;height:15px;background:#0078d7;"></div>
<div style="left:860px;top:149px;width:93px;height:15px;background:#0078d7;"></div>
<div style="left:320px;top:124px;width:1px;height:24px;background:#dedede;"></div>
<div style="left:321px;top:124px;width:1px;height:24px;background:#f7f7f7;"></div>
<div style="left:426px;top:124px;width:1px;height:24px;background:#dedede;"></div>
<div style="left:427px;top:124px;width:1px;height:24px;background:#f7f7f7;"></div>
<div style="left:516px;top:124px;width:1px;height:24px;background:#dedede;"></div>
<div style="left:517px;top:124px;width:1px;height:24px;background:#f7f7f7;"></div>
<div style="left:651px;top:124px;width:1px;height:24px;background:#dedede;"></div>
<div style="left:652px;top:124px;width:1px;height:24px;background:#f7f7f7;"></div>
<div style="left:786px;top:124px;width:1px;height:24px;background:#dedede;"></div>
<div style="left:787px;top:124px;width:1px;height:24px;background:#f7f7f7;"></div>
<div style="left:858px;top:124px;width:1px;height:24px;background:#dedede;"></div>
<div style="left:859px;top:124px;width:1px;height:24px;background:#f7f7f7;"></div>
<span class="t" style="left:218.5px;top:130px;font-size:11px;letter-spacing:-0.6px;">Name</span>
<span class="t" style="left:326.83px;top:130px;font-size:11px;letter-spacing:0.236px;">Type</span>
<span class="t" style="left:432.4px;top:130px;font-size:11px;letter-spacing:-0.148px;">State</span>
<span class="t" style="left:522.5px;top:130px;font-size:11px;letter-spacing:-0.163px;">Last State Changed</span>
<span class="t" style="left:657.3px;top:130px;font-size:11px;letter-spacing:-0.274px;">Last Modified</span>
<span class="t" style="left:792.3px;top:130px;font-size:11px;letter-spacing:-0.186px;">Status</span>
<span class="t" style="left:864.0px;top:130px;font-size:11px;letter-spacing:0.01px;">Ext. Status</span>
<svg style="left:263px;top:124.5px" width="9" height="6" viewBox="0 0 9 6"><path d="M0.6 5 L4.5 1 L8.4 5" fill="none" stroke="#5a5a5a" stroke-width="1"/></svg>
<span class="t" style="left:214.5px;top:149px;font-size:11px;color:#fff;letter-spacing:-0.344px;">System Monitor</span>
<span class="t" style="left:322.4px;top:149px;font-size:11px;color:#fff;letter-spacing:-0.36px;">System Monitor</span>
<span class="t" style="left:519.4px;top:149px;font-size:11px;color:#fff;letter-spacing:-0.194px;">2020-09-29 16:00:39</span>
<span class="t" style="left:654.5px;top:149px;font-size:11px;color:#fff;letter-spacing:-0.166px;">2020-09-25 13:20:52</span>
<span class="t" style="left:789.0px;top:149px;font-size:11px;color:#fff;letter-spacing:-0.15px;">0</span>
<span class="t" style="left:861.0px;top:149px;font-size:11px;color:#fff;letter-spacing:-0.15px;">0</span>
<span class="t" style="left:446.6px;top:149px;font-size:11px;color:#fff;letter-spacing:-0.175px;">Started</span>
<svg style="left:431px;top:150.5px" width="12" height="12" viewBox="0 0 12 12"><defs><radialGradient id="gk" cx="0.4" cy="0.3" r="0.8"><stop offset="0" stop-color="#a6d84a"/><stop offset="1" stop-color="#5c9a12"/></radialGradient></defs><circle cx="6" cy="6" r="5.7" fill="url(#gk)"/><path d="M3.2 6 L5.3 8 L8.8 4.3" fill="none" stroke="#fff" stroke-width="1.7" stroke-linecap="round" stroke-linejoin="round"/></svg>
<div style="left:213px;top:298px;width:741px;height:1px;background:#696969;"></div>
<div style="left:214px;top:299px;width:740px;height:24px;background:#f0f0f0;"></div>
<div style="left:221px;top:305px;width:13px;height:13px;background:#ffffff;box-sizing:border-box;border:1px solid #333333;"></div>
<svg style="left:222px;top:306px" width="11" height="11" viewBox="0 0 11 11"><path d="M1.8 5.4 L4.4 8.2 L9.4 2.4" fill="none" stroke="#2a2a2a" stroke-width="1.1"/></svg>
<span class="t" style="left:238.5px;top:304px;font-size:11px;font-weight:bold;letter-spacing:-0.287px;">Filter:</span>
<div style="left:281px;top:301px;width:668px;height:20px;background:#ffffff;box-sizing:border-box;border:1px solid #abadb3;"></div>
<div style="left:213px;top:323px;width:742px;height:1px;background:#ffffff;"></div>
<div style="left:213px;top:327px;width:742px;height:1px;background:#696969;"></div>
<div style="left:213px;top:327px;width:1px;height:293px;background:#696969;"></div>
<div style="left:213px;top:620px;width:742px;height:1px;background:#ffffff;"></div>
<!-- lower pane -->
<div style="left:255px;top:331px;width:55px;height:25px;background:#f0f0f0;box-sizing:border-box;border:1px solid #dcdcdc;border-bottom:none;"></div>
<div style="left:309px;top:331px;width:56px;height:25px;background:#f0f0f0;box-sizing:border-box;border:1px solid #dcdcdc;border-bottom:none;"></div>
<div style="left:214px;top:355px;width:738px;height:1px;background:#dcdcdc;"></div>
<div style="left:951px;top:355px;width:1px;height:264px;background:#dcdcdc;"></div>
<div style="left:214px;top:618px;width:738px;height:1px;background:#dcdcdc;"></div>
<div style="left:214px;top:617px;width:737px;height:1px;background:#ffffff;"></div>
<div style="left:214px;top:356px;width:737px;height:3px;background:#ffffff;"></div>
<div style="left:214px;top:356px;width:2px;height:262px;background:#ffffff;"></div>
<div style="left:214px;top:329px;width:41px;height:28px;background:#ffffff;box-sizing:border-box;border:1px solid #dcdcdc;border-bottom:none;"></div>
<span class="t" style="left:219.6px;top:335px;font-size:11px;letter-spacing:-0.106px;">Status</span>
<span class="t" style="left:257.5px;top:337px;font-size:11px;letter-spacing:-0.063px;">Properties</span>
<span class="t" style="left:313.8px;top:337px;font-size:11px;letter-spacing:-0.214px;">Attributes</span>
<div class="grp" style="left:218px;top:365px;width:245px;height:114px"></div>
<div style="left:222px;top:365px;width:49px;height:1px;background:#f0f0f0;"></div>
<span class="t" style="left:224.5px;top:359px;font-size:11px;letter-spacing:-0.169px;">Overview</span>
<div class="grp" style="left:467px;top:365px;width:482px;height:52px"></div>
<div style="left:472px;top:365px;width:42px;height:1px;background:#f0f0f0;"></div>
<span class="t" style="left:473.6px;top:359px;font-size:11px;letter-spacing:-0.168px;">0 Reads</span>
<div class="grp" style="left:467px;top:426px;width:482px;height:53px"></div>
<div style="left:472px;top:426px;width:44px;height:1px;background:#f0f0f0;"></div>
<span class="t" style="left:473.6px;top:420px;font-size:11px;letter-spacing:-0.125px;">0 Writes</span>
<div class="grp" style="left:218px;top:488px;width:731px;height:126px"></div>
<div style="left:222px;top:488px;width:66px;height:1px;background:#f0f0f0;"></div>
<span class="t" style="left:224.0px;top:482px;font-size:11px;letter-spacing:-0.046px;">Latest Errors</span>
<span class="t" style="left:226.2px;top:380px;font-size:11px;font-weight:bold;letter-spacing:0.086px;">Start Time (ms):</span>
<div class="fld" style="left:357px;top:377px;width:98px;height:20px"></div>
<span class="t" style="left:357px;top:380px;width:93px;text-align:right">0</span>
<span class="t" style="left:226.2px;top:404px;font-size:11px;font-weight:bold;letter-spacing:0.078px;">Stop Time (ms):</span>
<div class="fld" style="left:357px;top:401px;width:98px;height:20px"></div>
<span class="t" style="left:357px;top:404px;width:93px;text-align:right">0</span>
<span class="t" style="left:226.2px;top:428px;font-size:11px;font-weight:bold;letter-spacing:0.085px;">Avg Queue Wait (ms):</span>
<div class="fld" style="left:357px;top:425px;width:98px;height:20px"></div>
<span class="t" style="left:357px;top:428px;width:93px;text-align:right">0</span>
<span class="t" style="left:226.2px;top:452px;font-size:11px;font-weight:bold;letter-spacing:-0.111px;">Queue Depth:</span>
<div class="fld" style="left:357px;top:449px;width:98px;height:20px"></div>
<span class="t" style="left:357px;top:452px;width:93px;text-align:right">0</span>
<span class="t" style="left:475.0px;top:387px;font-size:11px;font-weight:bold;letter-spacing:-0.011px;">Last Read:</span>
<div class="fld" style="left:542px;top:384px;width:231px;height:20px"></div>
<span class="t" style="left:542px;top:387px;width:226px;text-align:right">n/a</span>
<span class="t" style="left:781.4px;top:387px;font-size:11px;font-weight:bold;letter-spacing:0.139px;">Avg Read (ms):</span>
<div class="fld" style="left:876px;top:384px;width:64px;height:20px"></div>
<span class="t" style="left:876px;top:387px;width:59px;text-align:right">0</span>
<span class="t" style="left:475.0px;top:448px;font-size:11px;font-weight:bold;letter-spacing:-0.025px;">Last Write:</span>
<div class="fld" style="left:544px;top:445px;width:228px;height:20px"></div>
<span class="t" style="left:544px;top:448px;width:223px;text-align:right">n/a</span>
<span class="t" style="left:780.2px;top:448px;font-size:11px;font-weight:bold;letter-spacing:0.119px;">Avg Write (ms):</span>
<div class="fld" style="left:877px;top:445px;width:63px;height:20px"></div>
<span class="t" style="left:877px;top:448px;width:58px;text-align:right">0</span>
<div style="left:222px;top:498px;width:723px;height:24px;background:#ffffff;"></div>
<div style="left:222px;top:522px;width:723px;height:1px;background:#f4f4f4;"></div>
<div style="left:222px;top:523px;width:723px;height:16px;background:#ffffff;"></div>
<div style="left:222px;top:555px;width:723px;height:16px;background:#ffffff;"></div>
<div style="left:222px;top:587px;width:723px;height:16px;background:#ffffff;"></div>
<div style="left:365px;top:498px;width:1px;height:24px;background:#e2e2e2;"></div>
<div style="left:366px;top:498px;width:1px;height:24px;background:#f7f7f7;"></div>
<div style="left:511px;top:498px;width:1px;height:24px;background:#e2e2e2;"></div>
<div style="left:512px;top:498px;width:1px;height:24px;background:#f7f7f7;"></div>
<div style="left:616px;top:498px;width:1px;height:24px;background:#e2e2e2;"></div>
<div style="left:617px;top:498px;width:1px;height:24px;background:#f7f7f7;"></div>
<div style="left:714px;top:498px;width:1px;height:24px;background:#e2e2e2;"></div>
<div style="left:715px;top:498px;width:1px;height:24px;background:#f7f7f7;"></div>
<div style="left:835px;top:498px;width:1px;height:24px;background:#e2e2e2;"></div>
<div style="left:836px;top:498px;width:1px;height:24px;background:#f7f7f7;"></div>
<span class="t" style="left:226.3px;top:504px;font-size:11px;letter-spacing:-0.185px;">Last Occurrence</span>
<span class="t" style="left:371.6px;top:504px;font-size:11px;letter-spacing:-0.142px;">First Occurrence</span>
<span class="t" style="left:517.7px;top:504px;font-size:11px;letter-spacing:-0.398px;">Variable</span>
<span class="t" style="left:622.4px;top:504px;font-size:11px;letter-spacing:-0.166px;">Status</span>
<span class="t" style="left:720.1px;top:504px;font-size:11px;letter-spacing:0.03px;">Ext. Status</span>
<span class="t" style="left:841.2px;top:504px;font-size:11px;letter-spacing:-0.057px;">Repeats</span>
<div class="btn" style="left:226px;top:625px;width:94px;height:21px"></div>
<span class="t" style="left:226px;top:628px;width:94px;text-align:center;color:#000">New</span>
<div class="btn" style="left:344px;top:625px;width:92px;height:21px"></div>
<span class="t" style="left:344px;top:628px;width:92px;text-align:center;color:#000">Edit</span>
<div class="btn dis" style="left:460px;top:625px;width:104px;height:21px"></div>
<span class="t" style="left:460px;top:628px;width:104px;text-align:center;color:#838383">Delete</span>
<div class="btn dis" style="left:588px;top:625px;width:98px;height:21px"></div>
<span class="t" style="left:588px;top:628px;width:98px;text-align:center;color:#838383">Start</span>
<div class="btn" style="left:710px;top:625px;width:96px;height:21px"></div>
<span class="t" style="left:710px;top:628px;width:96px;text-align:center;color:#000">Stop</span>
<div class="btn" style="left:830px;top:625px;width:112px;height:21px"></div>
<span class="t" style="left:830px;top:628px;width:112px;text-align:center;color:#000">Refresh</span>
<svg style="left:935px;top:658px" width="22" height="22" viewBox="0 0 22 22"><circle cx="10.8" cy="10.9" r="8.7" fill="#fafafa" stroke="#1b3f5c" stroke-width="1.7"/><text x="10.9" y="16.5" text-anchor="middle" font-family="'Liberation Sans',sans-serif" font-size="15.5" font-weight="bold" fill="#1b3f5c">?</text></svg>
<!-- red callouts -->
<div style="left:15px;top:223px;width:167px;height:110px;box-sizing:border-box;border:3px solid #fb3c3e;box-shadow:0 2px 5px rgba(0,0,0,0.5),inset 0 2px 5px rgba(0,0,0,0.5)"></div>
<div style="left:195px;top:80px;width:290px;height:44px;box-sizing:border-box;border:3px solid #fb3c3e;box-shadow:0 2px 5px rgba(0,0,0,0.5),inset 0 2px 5px rgba(0,0,0,0.5)"></div>
</body></html>
